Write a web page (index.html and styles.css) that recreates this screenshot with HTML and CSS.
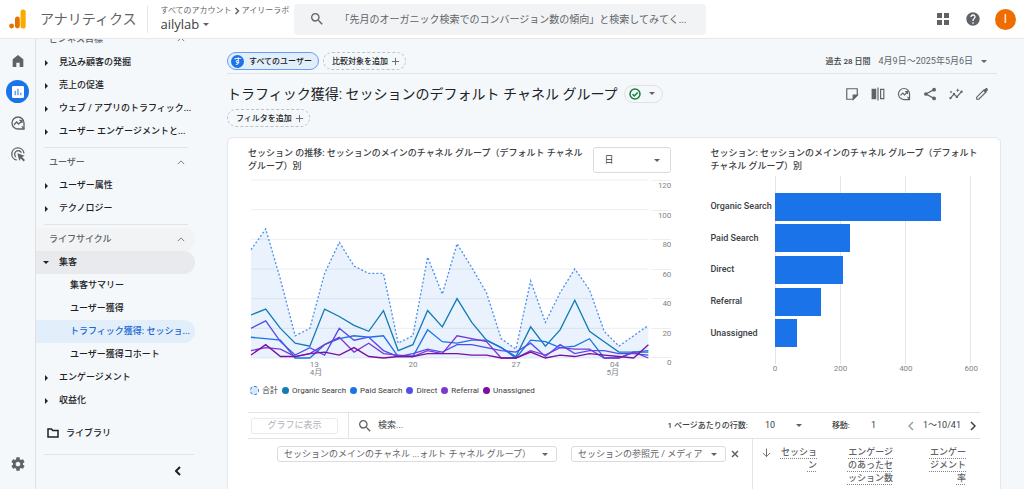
FILE: index.html
```html
<!DOCTYPE html>
<html lang="ja">
<head>
  <meta charset="UTF-8">
  <meta name="viewport" content="width=device-width, initial-scale=1.0">
  <title>アナリティクス</title>
  <link rel="stylesheet" href="styles.css">
</head>
<body>
  <header class="topbar">
    <a href="#" class="brand">
      <svg class="brand-logo" viewBox="0 0 17 20" aria-hidden="true">
        <rect x="11.5" y="0.5" width="5.2" height="19" rx="2.6" fill="#f9ab00"/>
        <rect x="6" y="7.5" width="4.8" height="12" rx="2.4" fill="#e37400"/>
        <circle cx="2.6" cy="17" r="2.4" fill="#e37400"/>
      </svg>
      <span class="brand-name">アナリティクス</span>
    </a>
    <div class="account">
      <div class="account-path">
        <span>すべてのアカウント</span>
        <svg viewBox="0 0 6 8" aria-hidden="true"><path d="M1.5 1l3 3-3 3"/></svg>
        <span>アイリーラボ</span>
      </div>
      <button class="account-name">ailylab<span class="caret"></span></button>
    </div>
    <label class="search">
      <svg class="icon" viewBox="0 0 24 24" aria-hidden="true"><path d="M15.5 14h-.79l-.28-.27A6.471 6.471 0 0 0 16 9.5 6.5 6.5 0 1 0 9.5 16c1.61 0 3.09-.59 4.23-1.57l.27.28v.79l5 4.99L20.49 19l-4.99-5zm-6 0C7.01 14 5 11.99 5 9.5S7.01 5 9.5 5 14 7.01 14 9.5 11.99 14 9.5 14z"/></svg>
      <input type="text" aria-label="検索" placeholder="「先月のオーガニック検索でのコンバージョン数の傾向」と検索してみてく...">
    </label>
    <div class="top-actions">
      <button aria-label="アプリ"><svg class="icon icon-apps" viewBox="0 0 12 12"><path d="M0 0h5v5H0zM7 0h5v5H7zM0 7h5v5H0zM7 7h5v5H7z"/></svg></button>
      <button aria-label="ヘルプ"><svg class="icon" viewBox="0 0 24 24"><path d="M12 2C6.48 2 2 6.48 2 12s4.48 10 10 10 10-4.48 10-10S17.52 2 12 2zm1 17h-2v-2h2v2zm2.07-7.75l-.9.92C13.45 12.9 13 13.5 13 15h-2v-.5c0-1.1.45-2.1 1.17-2.83l1.24-1.26c.37-.36.59-.86.59-1.41 0-1.1-.9-2-2-2s-2 .9-2 2H8c0-2.21 1.79-4 4-4s4 1.79 4 4c0 .88-.36 1.68-.93 2.25z"/></svg></button>
      <button class="avatar" aria-label="アカウント">I</button>
    </div>
  </header>

  <div class="layout">
    <nav class="rail">
      <a href="#" aria-label="ホーム"><svg class="icon" viewBox="0 0 24 24"><path d="M4 21V9.5L12 3l8 6.500V21h-5.500v-6.500h-5V21z"/></svg></a>
      <a href="#" class="active" aria-label="レポート"><svg class="icon" viewBox="0 0 24 24"><path d="M19 3H5a2 2 0 0 0-2 2v14a2 2 0 0 0 2 2h14a2 2 0 0 0 2-2V5a2 2 0 0 0-2-2zM8.500 17H7v-7h1.500v7zm4.200 0h-1.500V7h1.500v10zm4.300 0h-1.500v-4H17v4z"/></svg></a>
      <a href="#" aria-label="探索"><svg class="icon line" viewBox="0 0 24 24"><path d="M12 3a9 9 0 1 0 0 18h9v-9a9 9 0 0 0-9-9z"/><path d="M6 14.500l4-4 3 3 5-5M14 8h4v4"/><path d="M18 17l3 4" /></svg></a>
      <a href="#" aria-label="広告"><svg class="icon" viewBox="0 0 24 24"><g class="line"><path d="M10 21a9.200 9.200 0 1 1 11-10"/><path d="M9 16.500A5.300 5.300 0 1 1 17 10"/></g><path d="M11 11l11 3.600-4 2 4.500 4.500-2 2-4.500-4.500-2 3.900z"/></svg></a>
      <a href="#" class="rail-settings" aria-label="管理"><svg class="icon" viewBox="0 0 24 24"><path d="M19.430 12.980c.04-.32.07-.64.07-.98s-.03-.66-.07-.98l2.110-1.650c.19-.15.24-.42.12-.64l-2-3.460c-.12-.22-.39-.3-.61-.22l-2.490 1c-.52-.4-1.080-.73-1.690-.98l-.38-2.650A.488.488 0 0 0 14 2h-4c-.25 0-.46.18-.49.42l-.38 2.650c-.61.25-1.170.59-1.690.98l-2.490-1c-.23-.09-.49 0-.61.22l-2 3.460c-.13.22-.07.49.12.64l2.110 1.650c-.04.32-.07.65-.07.98s.03.66.07.98l-2.110 1.650c-.19.15-.24.42-.12.64l2 3.460c.12.22.39.3.61.22l2.490-1c.52.4 1.080.73 1.690.98l.38 2.650c.03.24.24.42.49.42h4c.25 0 .46-.18.49-.42l.38-2.650c.61-.25 1.170-.59 1.690-.98l2.490 1c.23.09.49 0 .61-.22l2-3.460c.12-.22.07-.49-.12-.64l-2.110-1.650zM12 15.500c-1.930 0-3.500-1.570-3.500-3.500s1.570-3.500 3.500-3.500 3.500 1.570 3.500 3.500-1.570 3.500-3.500 3.500z"/></svg></a>
    </nav>

    <aside class="sidebar">
      <ul class="menu">
        <li><button class="section">ビジネス目標<svg viewBox="0 0 10 6"><path d="M1 5l4-4 4 4"/></svg></button></li>
        <li><a href="#" class="group">見込み顧客の発掘</a></li>
        <li><a href="#" class="group">売上の促進</a></li>
        <li><a href="#" class="group">ウェブ / アプリのトラフィック...</a></li>
        <li><a href="#" class="group">ユーザー エンゲージメントと...</a></li>
        <li class="divider"></li>
        <li><button class="section">ユーザー<svg viewBox="0 0 10 6"><path d="M1 5l4-4 4 4"/></svg></button></li>
        <li><a href="#" class="group">ユーザー属性</a></li>
        <li><a href="#" class="group">テクノロジー</a></li>
        <li class="divider"></li>
        <li><button class="section hovered">ライフサイクル<svg viewBox="0 0 10 6"><path d="M1 5l4-4 4 4"/></svg></button></li>
        <li><a href="#" class="group open">集客</a></li>
        <li><a href="#" class="child">集客サマリー</a></li>
        <li><a href="#" class="child">ユーザー獲得</a></li>
        <li><a href="#" class="child current">トラフィック獲得: セッショ...</a></li>
        <li><a href="#" class="child">ユーザー獲得コホート</a></li>
        <li><a href="#" class="group">エンゲージメント</a></li>
        <li><a href="#" class="group">収益化</a></li>
      </ul>
      <a href="#" class="library">
        <svg viewBox="0 0 12 10" aria-hidden="true"><path d="M1 1h3.500l1.200 1.400H11V9H1z"/></svg>
        ライブラリ
      </a>
      <div class="sidebar-foot">
        <button aria-label="折りたたむ"><svg viewBox="0 0 6 10"><path d="M5 1L1 5l4 4"/></svg></button>
      </div>
    </aside>

    <main class="content">
      <div class="compare-row">
        <button class="chip selected"><span class="chip-badge">す</span>すべてのユーザー</button>
        <button class="chip add">比較対象を追加<svg viewBox="0 0 10 10"><path d="M5 1v8M1 5h8"/></svg></button>
        <button class="date-range"><span class="date-label">過去 28 日間</span>4月9日～2025年5月6日<span class="caret"></span></button>
      </div>

      <div class="title-row">
        <h1>トラフィック獲得: セッションのデフォルト チャネル グループ</h1>
        <button class="status" aria-label="ステータス"><svg viewBox="0 0 12 12"><circle cx="6" cy="6" r="5"/><path d="M3.500 6.200l1.800 1.700 3.400-3.500"/></svg><span class="caret"></span></button>
        <div class="tools">
          <button aria-label="メモ"><svg class="icon line" viewBox="0 0 24 24"><path d="M3 3h18v11l-7 7H3z"/><path d="M14 21v-7h7z" fill="#5f6368"/></svg></button>
          <button aria-label="比較"><svg class="icon" viewBox="0 0 24 24"><path d="M1 3h8v18H1zM11 1h2v22h-2z"/><path class="line" d="M16.500 4h5.500v16h-5.500z"/></svg></button>
          <button aria-label="探索"><svg class="icon line" viewBox="0 0 24 24"><path d="M12 2.500a9.500 9.500 0 1 0 0 19h9.500V12A9.500 9.500 0 0 0 12 2.500z"/><path d="M6 14.500l4-4 3 3 5-5M14 8h4v4"/><path d="M18 17l3 4"/></svg></button>
          <button aria-label="共有"><svg class="icon" viewBox="0 0 24 24"><path class="line" d="M19 4.500L5 12l14 7.500"/><circle cx="19" cy="4.500" r="3.200"/><circle cx="5" cy="12" r="3.200"/><circle cx="19" cy="19.500" r="3.200"/></svg></button>
          <button aria-label="インサイト"><svg class="icon" viewBox="0 0 24 24"><path class="line" d="M2.500 19l6-7 5 5 8-9"/><circle cx="2.500" cy="19" r="2"/><circle cx="8.500" cy="12" r="2"/><circle cx="13.500" cy="17" r="2"/><circle cx="21.500" cy="8" r="2"/><path d="M15 2l1 2.500 2.500 1L16 6.500 15 9l-1-2.500-2.500-1 2.500-1zM3.500 6l.8 1.700 1.700.8-1.700.8-.8 1.700-.8-1.700L1 8.500l1.700-.8z"/></svg></button>
          <button aria-label="編集"><svg class="icon" viewBox="0 0 24 24"><path class="line" d="M3 21v-3.500L15.500 5 19 8.500 6.500 21z"/><path d="M14 6.500l4-4c1-1 2-1 3 0l.5.500c1 1 1 2 0 3l-4 4z"/></svg></button>
        </div>
      </div>

      <button class="chip add">フィルタを追加<svg viewBox="0 0 10 10"><path d="M5 1v8M1 5h8"/></svg></button>

      <section class="card">
        <div class="charts">
          <div class="trend">
            <div class="trend-head">
              <h2>セッション の推移: セッションのメインのチャネル グループ（デフォルト チャネル グループ）別</h2>
              <span class="select-box period">
                <select aria-label="期間"><option>日</option></select>
              </span>
            </div>
            <div class="trend-body">
              <div class="plot">
                <!-- 1 unit = 1 day / 1 session, y axis flipped -->
                <svg viewBox="0 0 27 120" preserveAspectRatio="none" role="img" aria-label="セッションの推移">
                  <path class="grid" d="M0 0H27M0 20H27M0 40H27M0 60H27M0 80H27M0 100H27M0 120H27"/>
                  <g transform="matrix(1 0 0 -1 0 120)">
                    <polygon class="area" points="0,0 0,73 1,87 2,53 3,15 4,20 5,57 6,78 7,62 8,57 9,57 10,10 11,15 12,68 13,43 14,77 15,61 16,44 17,13 18,6 19,52 20,24 21,44 22,60 23,46 24,18 25,8 26,15 27,22 27,0"/>
                    <polyline class="total" points="0,73 1,87 2,53 3,15 4,20 5,57 6,78 7,62 8,57 9,57 10,10 11,15 12,68 13,43 14,77 15,61 16,44 17,13 18,6 19,52 20,24 21,44 22,60 23,46 24,18 25,8 26,15 27,22"/>
                    <polyline class="organic" points="0,29 1,33 2,20 3,10 4,8 5,33 6,28 7,22 8,18 9,32 10,5 11,9 12,32 13,21 14,40 15,24 16,12 17,7 18,1 19,21 20,8 21,19 22,39 23,18 24,11 25,4 26,4 27,4"/>
                    <polyline class="paid" points="0,14 1,13 2,12 3,0 4,0 5,9 6,13 7,15 8,14 9,15 10,1 11,1 12,19 13,11 14,10 15,12 16,12 17,7 18,0 19,12 20,11 21,7 22,8 23,13 24,0 25,0 26,4 27,5"/>
                    <polyline class="direct" points="0,20 1,25 2,11 3,2 4,7 5,2 6,20 7,12 8,14 9,5 10,1 11,3 12,6 13,4 14,9 15,9 16,7 17,5 18,4 19,10 20,1 21,9 22,3 23,5 24,5 25,3 26,3 27,2"/>
                    <polyline class="referral" points="0,5 1,7 2,6 3,1 4,3 5,9 6,14 7,4 8,10 9,3 10,2 11,1 12,5 13,3 14,15 15,13 16,11 17,0 18,0 19,5 20,2 21,7 22,6 23,6 24,0 25,0 26,4 27,0"/>
                    <polyline class="unassigned" points="0,2 1,9 2,1 3,1 4,3 5,4 6,2 7,7 8,1 9,0 10,1 11,1 12,3 13,3 14,3 15,2 16,2 17,0 18,0 19,4 20,0 21,2 22,1 23,3 24,2 25,1 26,0 27,9"/>
                  </g>
                </svg>
              </div>
              <div class="y-axis">
                <span>120</span><span>100</span><span>80</span><span>60</span><span>40</span><span>20</span><span>0</span>
              </div>
              <div class="x-axis">
                <span class="tick-13">13<br>4月</span>
                <span class="tick-20">20</span>
                <span class="tick-27">27</span>
                <span class="tick-04">04<br>5月</span>
              </div>
            </div>
            <ul class="legend">
              <li class="key-total">合計</li>
              <li class="key-organic">Organic Search</li>
              <li class="key-paid">Paid Search</li>
              <li class="key-direct">Direct</li>
              <li class="key-referral">Referral</li>
              <li class="key-unassigned">Unassigned</li>
            </ul>
          </div>

          <div class="breakdown">
            <h2>セッション: セッションのメインのチャネル グループ（デフォルト チャネル グループ）別</h2>
            <div class="bars">
              <div class="bar-labels">
                <span>Organic Search</span><span>Paid Search</span><span>Direct</span><span>Referral</span><span>Unassigned</span>
              </div>
              <div class="bar-plot">
                <div class="bar" style="width: 85%"></div>
                <div class="bar" style="width: 38.500%"></div>
                <div class="bar" style="width: 34.600%"></div>
                <div class="bar" style="width: 23.700%"></div>
                <div class="bar" style="width: 11.200%"></div>
              </div>
              <div class="bar-axis"><span>0</span><span>200</span><span>400</span><span>600</span></div>
            </div>
          </div>
        </div>

        <div class="table-bar">
          <div class="plot-cell"><button class="plot-button" disabled>グラフに表示</button></div>
          <label class="table-search">
            <svg class="icon" viewBox="0 0 24 24" aria-hidden="true"><path d="M15.500 14h-.79l-.28-.27A6.471 6.471 0 0 0 16 9.500 6.500 6.500 0 1 0 9.500 16c1.610 0 3.090-.59 4.230-1.570l.27.28v.79l5 4.990L20.490 19l-4.990-5zm-6 0C7.010 14 5 11.990 5 9.500S7.010 5 9.500 5 14 7.010 14 9.500 11.990 14 9.500 14z"/></svg>
            <input type="text" aria-label="検索" placeholder="検索...">
          </label>
          <label class="rows-label" for="rows">1 ページあたりの行数:</label>
          <span class="select-box rows"><select id="rows"><option>10</option></select></span>
          <label class="goto-label" for="goto">移動:</label>
          <input class="goto" id="goto" type="text" value="1">
          <div class="pager">
            <button class="prev" aria-label="前へ"><svg viewBox="0 0 6 10"><path d="M5 1L1 5l4 4"/></svg></button>
            <span>1～10/41</span>
            <button aria-label="次へ"><svg viewBox="0 0 6 10"><path d="M1 1l4 4-4 4"/></svg></button>
          </div>
        </div>

        <table class="report">
          <thead>
            <tr>
              <th class="dimensions">
                <div class="dimension-row">
                  <span class="select-box primary"><select aria-label="ディメンション"><option>セッションのメインのチャネル ...ォルト チャネル グループ）</option></select></span>
                  <span class="select-box secondary"><select aria-label="セカンダリ ディメンション"><option>セッションの参照元 / メディア</option></select></span>
                  <button class="remove" aria-label="削除"><svg viewBox="0 0 8 8"><path d="M1 1l6 6M7 1L1 7"/></svg></button>
                </div>
              </th>
              <th class="metric sorted">
                <div class="metric-row">
                  <svg viewBox="0 0 10 10" aria-hidden="true"><path d="M5 0v9M1 5l4 4 4-4"/></svg>
                  <span class="metric-name">セッショ<br>ン</span>
                </div>
              </th>
              <th class="metric"><span class="metric-name">エンゲージ<br>のあったセ<br>ッション数</span></th>
              <th class="metric last"><span class="metric-name">エンゲー<br>ジメント<br>率</span></th>
            </tr>
          </thead>
        </table>
      </section>
    </main>
  </div>
</body>
</html>
```
FILE: styles.css
```css
* {
  box-sizing: border-box;
}

body {
  display: flex;
  flex-direction: column;
  height: 100vh;
  margin: 0;
  overflow: hidden;
  background-color: #f4f8fb;
  color: #3c4043;
  font-family: Roboto, "Noto Sans CJK JP", sans-serif;
  font-size: 9px;
  line-height: 13px;
}

button, input, select {
  margin: 0;
  padding: 0;
  border: none;
  background: none;
  color: inherit;
  font: inherit;
}

button {
  cursor: pointer;
}

input, select {
  min-width: 0;
  outline: none;
}

a {
  color: inherit;
  text-decoration: none;
}

ul {
  margin: 0;
  padding: 0;
  list-style: none;
}

h1, h2 {
  margin: 0;
}

svg {
  display: block;
  flex: none;
  fill: none;
  stroke: currentColor;
}

.icon {
  width: 16px;
  height: 16px;
  fill: #5f6368;
  stroke: none;
}

.icon.line, .icon .line {
  fill: none;
  stroke: #5f6368;
  stroke-width: 2;
}

.caret {
  display: inline-block;
  flex: none;
  border: 3px solid transparent;
  border-top-color: #5f6368;
  border-bottom: none;
}

/* Top bar */
.topbar {
  display: flex;
  flex: none;
  align-items: center;
  height: 39px;
  padding: 0 8px 0 9px;
  background-color: #fff;
  border-bottom: 1px solid #e6e9ec;
}

.brand {
  display: flex;
  align-items: center;
  gap: 14px;
  padding-right: 11px;
}

.brand-logo {
  width: 17px;
  height: 20px;
  stroke: none;
}

.brand-name {
  color: #5f6368;
  font-size: 14px;
  line-height: 20px;
}

.account {
  width: 147px;
  padding-left: 12px;
  border-left: 1px solid #e3e5e8;
  line-height: 10px;
}

.account-path {
  display: flex;
  align-items: center;
  gap: 2px;
  color: #5f6368;
  font-size: 8px;
  white-space: nowrap;
}

.account-path svg {
  width: 6px;
  height: 8px;
  stroke-width: 1.5;
}

.account-name {
  display: flex;
  align-items: center;
  gap: 4px;
  font-family: "Open Sans", sans-serif;
  font-size: 13px;
  line-height: 17px;
}

.search {
  display: flex;
  flex: 1;
  align-items: center;
  gap: 14px;
  max-width: 412px;
  height: 31px;
  padding: 0 8px 0 15px;
  background-color: #f1f3f4;
  border-radius: 4px;
}

.search input {
  flex: 1;
  font-size: 10px;
}

.search input::placeholder {
  color: #5f6368;
}

.top-actions {
  display: flex;
  align-items: center;
  gap: 14px;
  margin-left: auto;
}

.icon-apps {
  width: 12px;
  height: 12px;
  margin: 0 2px;
}

.avatar {
  width: 21px;
  height: 21px;
  background-color: #ef6c00;
  border-radius: 50%;
  color: #fff;
  font-size: 12px;
}

/* Left icon rail */
.layout {
  display: flex;
  flex: 1;
  min-height: 0;
}

.rail {
  display: flex;
  flex: none;
  flex-direction: column;
  align-items: center;
  gap: 8px;
  width: 36px;
  padding: 10px 0 14px;
  border-right: 1px solid #dfe1e5;
}

.rail a {
  display: flex;
  align-items: center;
  justify-content: center;
  width: 23px;
  height: 23px;
  border-radius: 50%;
}

.rail .active {
  background-color: #1a73e8;
}

.rail .active .icon {
  fill: #fff;
}

.rail .rail-settings {
  margin-top: auto;
}

/* Report menu */
.sidebar {
  flex: none;
  width: 159px;
  overflow: hidden;
  color: #202124;
  font-weight: 500;
}

.menu {
  margin-top: -11px;
}

.menu a, .section {
  display: flex;
  align-items: center;
  width: 100%;
  height: 23px;
  border-radius: 0 12px 12px 0;
  white-space: nowrap;
}

.section {
  justify-content: space-between;
  padding: 0 10px 0 13px;
  color: #5f6368;
}

.section svg {
  width: 8px;
  height: 5px;
}

.hovered {
  background-color: #f1f3f4;
}

.group::before {
  width: 0;
  margin: 0 11px 0 9px;
  border: 3px solid transparent;
  border-right: none;
  border-left-color: #202124;
  content: "";
}

.group.open {
  background-color: #e8eaed;
}

.group.open::before {
  margin: 0 10px 0 7px;
  border: 3px solid transparent;
  border-top-color: #202124;
  border-bottom: none;
}

.child {
  padding-left: 34px;
}

.current {
  background-color: #e3eefb;
  color: #1967d2;
}

.divider {
  height: 1px;
  margin: 4px 7px 3px 8px;
  background-color: #e0e3e7;
}

.library {
  display: flex;
  align-items: center;
  gap: 7px;
  height: 43px;
  margin: 0 1px 0 8px;
  padding-left: 3px;
  border-bottom: 1px solid #e0e3e7;
}

.library svg {
  width: 12px;
  height: 10px;
  stroke-width: 1.5;
}

.sidebar-foot {
  display: flex;
  justify-content: flex-end;
  padding: 11px 14px;
}

.sidebar-foot svg {
  width: 6px;
  height: 10px;
  stroke-width: 2;
}

/* Report */
.content {
  display: flex;
  flex: 1;
  flex-direction: column;
  align-items: flex-start;
  min-width: 0;
  padding: 13px 23px 0 32px;
}

.compare-row {
  display: flex;
  flex: none;
  align-items: center;
  align-self: stretch;
  gap: 4px;
  margin-right: 4px;
  padding-bottom: 3px;
  border-bottom: 1px solid #e0e3e7;
}

.chip {
  display: flex;
  align-items: center;
  flex: none;
  height: 18px;
  padding: 0 6px;
  border-radius: 9px;
  color: #202124;
  font-size: 8px;
  font-weight: 500;
}

.chip.add {
  gap: 3px;
  padding: 0 5px 0 8px;
  border: 1px dashed #bdc1c6;
}

.chip svg {
  width: 9px;
  height: 9px;
  stroke: #5f6368;
}

.chip.selected {
  gap: 5px;
  padding-left: 3px;
  background-color: #e3eefb;
  border: 1px solid #669df6;
}

.chip-badge {
  width: 13px;
  height: 13px;
  background-color: #1a73e8;
  border-radius: 50%;
  color: #fff;
}

.date-range {
  display: flex;
  align-items: center;
  gap: 8px;
  margin-left: auto;
  padding-right: 10px;
  color: #5f6368;
}

.date-label {
  color: #3c4043;
  font-size: 8px;
  font-weight: 500;
}

.title-row {
  display: flex;
  flex: none;
  align-items: center;
  align-self: stretch;
  gap: 6px;
  height: 35px;
  padding: 4px 12px 0 0;
}

h1 {
  color: #202124;
  font-size: 14px;
  font-weight: 400;
  line-height: 20px;
  white-space: nowrap;
}

.status {
  display: flex;
  align-items: center;
  gap: 8px;
  height: 18px;
  padding: 0 7px 0 4px;
  border: 1px solid #dfe1e5;
  border-radius: 9px;
}

.status svg {
  width: 12px;
  height: 12px;
  stroke: #188038;
  stroke-width: 1.5;
}

.tools {
  display: flex;
  gap: 12px;
  margin-left: auto;
}

.tools .icon {
  width: 14px;
  height: 14px;
}

.card {
  flex: none;
  align-self: stretch;
  margin-top: 10px;
  padding: 9px 20px 24px;
  background-color: #fff;
  border: 1px solid #e3e7eb;
  border-radius: 6px;
}

h2 {
  color: #3c4043;
  font-size: 9px;
  font-weight: 500;
  line-height: 13px;
  word-break: keep-all;
}

.charts {
  display: grid;
  grid-template-columns: minmax(0, 424fr) minmax(0, 270fr);
  gap: 39px;
}

.trend-head {
  display: flex;
  justify-content: space-between;
  gap: 8px;
  height: 33px;
}

.select-box {
  display: grid;
  align-items: center;
  border: 1px solid #dadce0;
  border-radius: 3px;
}

.select-box select {
  grid-area: 1 / 1;
  width: 100%;
  height: 100%;
  padding: 0 16px 0 6px;
  appearance: none;
}

.select-box::after {
  grid-area: 1 / 1;
  justify-self: end;
  margin-right: 8px;
  border: 3px solid transparent;
  border-top-color: #5f6368;
  border-bottom: none;
  content: "";
  pointer-events: none;
}

.period {
  flex: none;
  width: 78px;
  height: 26px;
}

.period select {
  padding-left: 10px;
}

.period::after {
  margin-right: 10px;
}

.trend-body {
  display: grid;
  grid-template-columns: 1fr 20px;
  column-gap: 3px;
  margin-left: 3px;
}

.plot svg {
  width: 100%;
  height: 178px;
  overflow: visible;
}

.plot path, .plot polyline {
  vector-effect: non-scaling-stroke;
}

.plot polyline {
  stroke-width: 1.3;
}

.grid {
  stroke: #eceef1;
}

.area {
  fill: #1a73e8;
  fill-opacity: 0.09;
  stroke: none;
}

.total {
  stroke: #4a8fef;
  stroke-dasharray: 2 2;
}

.organic {
  stroke: #127bb4;
}

.paid {
  stroke: #1a73e8;
}

.direct {
  stroke: #514eea;
}

.referral {
  stroke: #7b38d3;
}

.unassigned {
  stroke: #7a0fa0;
}

.y-axis {
  display: flex;
  flex-direction: column;
  height: 178px;
  color: #80868b;
  font-size: 8px;
  line-height: 9px;
  text-align: right;
}

.y-axis span {
  flex: 1;
  border-top: 1px solid #eceef1;
}

.y-axis span:last-child {
  flex: none;
  height: 0;
}

.x-axis {
  display: grid;
  grid-template-columns: repeat(27, 1fr);
  height: 20px;
  padding-top: 3px;
  color: #80868b;
  font-size: 8px;
  line-height: 8px;
}

.tick-13 {
  grid-column: 5 / 8;
}

.tick-20 {
  grid-column: 11 / 13;
  text-align: center;
}

.tick-27 {
  grid-column: 18 / 20;
  text-align: center;
}

.tick-04 {
  grid-column: 24 / 26;
  text-align: right;
}

.legend {
  display: flex;
  gap: 4px;
  margin: 6px 0 0 2px;
  font-size: 8px;
}

.legend li {
  display: flex;
  align-items: center;
  gap: 3px;
}

.legend li::before {
  width: 7px;
  height: 7px;
  background-color: currentColor;
  border-radius: 50%;
  content: "";
}

.legend .key-total::before {
  background-color: #dbe8fb;
  border: 1px dashed #1a73e8;
}

.legend .key-organic::before {
  background-color: #127bb4;
}

.legend .key-paid::before {
  background-color: #1a73e8;
}

.legend .key-direct::before {
  background-color: #514eea;
}

.legend .key-referral::before {
  background-color: #7b38d3;
}

.legend .key-unassigned::before {
  background-color: #7a0fa0;
}

/* Bar chart */
.bars {
  display: grid;
  grid-template-columns: 65px 1fr;
  margin: 3px 9px 0 0;
}

.bar-labels, .bar-plot {
  display: grid;
  grid-template-rows: repeat(5, 1fr);
  align-items: center;
  height: 188px;
  padding: 15px 0;
}

.bar-labels {
  font-weight: 500;
  white-space: nowrap;
}

.bar-plot {
  background-image: linear-gradient(to right, #e3e5e8 1px, transparent 1px);
  background-size: 33.333% 100%;
  border-right: 1px solid #e3e5e8;
}

.bar {
  height: 28px;
  background-color: #1a73e8;
}

.bar-axis {
  display: grid;
  grid-template-columns: repeat(4, 1fr);
  grid-column: 2;
  margin: 0 -33px;
  color: #80868b;
  font-size: 8px;
  line-height: 10px;
  text-align: center;
}

/* Table */
.table-bar {
  display: flex;
  align-items: center;
  height: 27px;
  margin-top: 15px;
  border: solid #e0e3e7;
  border-width: 1px 0;
}

.plot-cell {
  display: flex;
  align-items: center;
  align-self: stretch;
  padding: 0 10px 0 3px;
  border-right: 1px solid #e0e3e7;
}

.plot-button {
  width: 87px;
  height: 16px;
  border: 1px solid #e8eaed;
  border-radius: 3px;
  color: #aeb2b7;
}

.table-search {
  display: flex;
  flex: 1;
  align-items: center;
  gap: 5px;
  min-width: 0;
  padding-left: 8px;
}

.table-search input::placeholder {
  color: #3c4043;
}

.rows-label, .goto-label {
  font-size: 8px;
  font-weight: 500;
}

.rows {
  width: 62px;
  border: none;
}

.rows select {
  padding-left: 17px;
}

.goto-label {
  margin-left: 22px;
}

.goto {
  width: 40px;
  padding-left: 21px;
}

.pager {
  display: flex;
  align-items: center;
  gap: 9px;
  padding: 0 4px 0 18px;
}

.pager svg {
  width: 6px;
  height: 10px;
  stroke-width: 1.5;
}

.pager .prev {
  color: #9aa0a6;
}

.report {
  width: 100%;
  border-collapse: collapse;
  table-layout: fixed;
}

.report th {
  padding: 7px 0 12px;
  color: #5f6368;
  font-weight: 500;
  text-align: right;
  vertical-align: top;
}

.dimension-row {
  display: flex;
  align-items: center;
  gap: 14px;
  padding-left: 29px;
  font-weight: 400;
}

.dimension-row .select-box {
  height: 16px;
  min-width: 0;
}

.primary {
  width: 280px;
}

.secondary {
  width: 155px;
}

.remove {
  margin-left: -9px;
}

.remove svg {
  width: 8px;
  height: 8px;
  stroke-width: 1.5;
}

.report .metric {
  width: 76px;
}

.report .sorted {
  width: 65px;
  border-left: 1px solid #e0e3e7;
}

.report .last {
  width: 87px;
  padding-right: 14px;
}

.metric-row {
  display: flex;
  justify-content: space-between;
  padding-left: 9px;
}

.metric-row svg {
  width: 9px;
  height: 10px;
  margin-top: 2px;
}

.metric-name {
  text-decoration: underline dotted #80868b;
  text-underline-offset: 3px;
}
```
